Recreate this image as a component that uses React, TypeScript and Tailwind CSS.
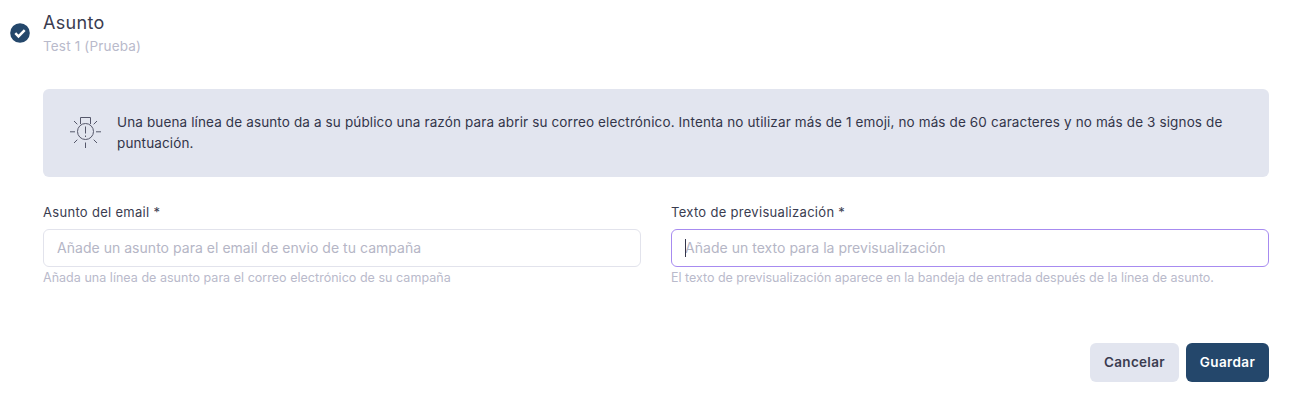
export default function App() {
  return (
    <div className="h-[404px] w-[1290px] overflow-hidden bg-white font-['Inter',sans-serif] text-[#33354a]">
      <div className="flex items-center pl-[10px] pt-[12px]">
        <svg width="20" height="20" viewBox="0 0 20 20" className="mb-[2px]">
          <circle cx="10" cy="10" r="9.8" fill="#24476b" />
          <path d="M5.3 10.2l3.2 3.2 6.2-6.2" fill="none" stroke="#fff" strokeWidth="2.5" />
        </svg>
        <div className="ml-[13px]">
          <div className="text-[18px] leading-[22px] tracking-[0.3px] text-[#3a3c50]">Asunto</div>
          <div className="mt-[3px] text-[13.5px] leading-[18px] tracking-[0.17px] text-[#b9bacb]">Test 1 (Prueba)</div>
        </div>
      </div>

      <div className="ml-[43px] mr-[21px] mt-[34px]">
        <div className="flex h-[88px] items-center rounded-[6px] bg-[#e2e5ef] pl-[26px] pr-[40px]">
          <svg width="34" height="34" viewBox="0 0 34 34" fill="none" stroke="#55576a" strokeWidth="1" className="shrink-0">
            <path d="M11.500 8V1.500h10V8" />
            <circle cx="16.500" cy="15.500" r="8" />
            <path d="M16.500 10.500v7M16.500 19.500v1.500" />
            <path d="M1 15.800h5M27 15.800h5M16.500 26.500v5.500M5 5l3.300 3.300M28 5l-3.300 3.300M5 27l3.300-3.300M28 27l-3.300-3.300" />
          </svg>
          <p className="ml-[14px] text-[13.5px] leading-[21px] tracking-[0.13px] text-[#33354a]">
            Una buena línea de asunto da a su público una razón para abrir su correo electrónico. Intenta no utilizar más de 1 emoji, no más de 60 caracteres y no más de 3 signos de puntuación.
          </p>
        </div>

        <div className="mt-[26px] grid grid-cols-2 gap-x-[30px]">
          <div>
            <label className="block text-[13px] leading-[18px] tracking-[0.3px] text-[#3a3c50]">Asunto del email *</label>
            <input
              readOnly
              placeholder="Añade un asunto para el email de envio de tu campaña"
              className="mt-[8px] block h-[38px] w-full rounded-[6px] border border-[#e2e3ec] bg-white px-[13px] pb-[2px] text-[14px] tracking-[0.03px] outline-none placeholder:text-[#b5b6c6]"
            />
            <p className="mt-[2px] text-[12.5px] leading-[18px] tracking-[0.03px] text-[#b9bacb]">Añada una línea de asunto para el correo electrónico de su campaña</p>
          </div>
          <div>
            <label className="block text-[13px] leading-[18px] tracking-[0.3px] text-[#3a3c50]">Texto de previsualización *</label>
            <div className="relative mt-[8px]">
              <input
                readOnly
                placeholder="Añade un texto para la previsualización"
                className="block h-[38px] w-full rounded-[6px] border border-[#a78bf0] bg-white px-[13px] pb-[2px] text-[14px] tracking-[0.03px] outline-none placeholder:text-[#b5b6c6]"
              />
              <span className="absolute left-[14px] top-[10px] h-[18px] w-px bg-[#33354a]" />
            </div>
            <p className="mt-[2px] text-[12.5px] leading-[18px] tracking-[-0.02px] text-[#b9bacb]">El texto de previsualización aparece en la bandeja de entrada después de la línea de asunto.</p>
          </div>
        </div>

        <div className="mt-[56px] flex justify-end gap-[7px]">
          <button className="h-[39px] w-[89px] rounded-[6px] bg-[#e2e5ef] text-[13.5px] font-semibold tracking-[0.3px] text-[#3a3c50]">Cancelar</button>
          <button className="h-[39px] w-[83px] rounded-[6px] bg-[#24476b] text-[13.5px] font-semibold tracking-[0.4px] text-white">Guardar</button>
        </div>
      </div>
    </div>
  );
}
